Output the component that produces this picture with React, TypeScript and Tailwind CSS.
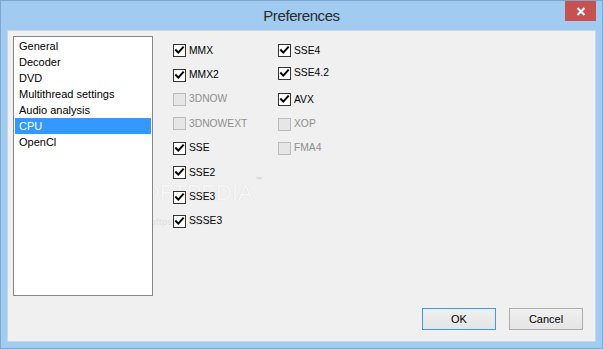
import React from "react";

type Item = { label: string; checked: boolean; disabled?: boolean; cls?: string };

const col1: Item[] = [
  { label: "MMX", checked: true },
  { label: "MMX2", checked: true },
  { label: "3DNOW", checked: false, disabled: true },
  { label: "3DNOWEXT", checked: false, disabled: true },
  { label: "SSE", checked: true },
  { label: "SSE2", checked: true },
  { label: "SSE3", checked: true },
  { label: "SSSE3", checked: true },
];

function Check({ item }: { item: Item }) {
  return (
    <div className={"flex items-center h-[24.4px] " + (item.cls ?? "")}>
      <div
        className={
          "w-[13px] h-[13px] border flex items-center justify-center shrink-0 " +
          (item.disabled ? "border-[#bcbcbc] bg-[#e6e6e6]" : "border-[#333333] bg-white")
        }
      >
        {item.checked && (
          <svg width="11" height="11" viewBox="0 0 11 11">
            <path d="M2 5.2 L4.3 7.6 L9 2.4" fill="none" stroke="#000" strokeWidth="2" strokeLinecap="square" />
          </svg>
        )}
      </div>
      <span
        className={
          "ml-[3px] text-[10.3px] leading-none " + (item.disabled ? "text-[#8f8f8f]" : "text-black")
        }
      >
        {item.label}
      </span>
    </div>
  );
}

export default function App() {
  const list = ["General", "Decoder", "DVD", "Multithread settings", "Audio analysis", "CPU", "OpenCl"];
  return (
    <div
      className="w-[603px] h-[349px] border border-[#7ea7cf] bg-[#a1cbf0] flex flex-col overflow-hidden"
      style={{ fontFamily: '"Liberation Sans", Arial, sans-serif' }}
    >
      <div className="relative h-[29px] shrink-0 flex items-center justify-center">
        <span className="text-[15px] tracking-[-0.4px] text-[#2b2b2b] mt-[1px]">Preferences</span>
        <div className="absolute right-[6px] top-0 w-[31px] h-[20px] bg-[#c75050] flex items-center justify-center">
          <svg width="10" height="9" viewBox="0 0 10 9">
            <path d="M1.5 1 L8.5 8 M8.5 1 L1.5 8" stroke="#fff" strokeWidth="2" />
          </svg>
        </div>
      </div>
      <div className="relative flex-1 mx-[6px] mb-[6px] bg-[#f0f0f0] border border-[#c6d7e8] flex flex-col">
        <div className="pointer-events-none absolute left-[120px] top-[151px] flex flex-col">
          <span
            className="text-[22px] leading-none text-[#f6f6f6]"
            style={{ textShadow: "0 0 1px #d2d2d2" }}
          >
            SOFTPEDIA
            <sup className="text-[6px] text-[#d0d0d0] align-top ml-[3px]">™</sup>
          </span>
          <span className="text-[9px] text-[#dedede] ml-[-6px] mt-[12px] tracking-[0.5px]">www.softpedia.com</span>
        </div>
        <div className="relative flex flex-1 pt-[5px] pl-[5px]">
          <div className="w-[140px] h-[260px] bg-white border border-[#828790] pt-[1px] pl-[1px] pr-[1px]">
            {list.map((l) => (
              <div
                key={l}
                className={
                  "h-[16px] flex items-center pl-[4px] text-[11px] " +
                  (l === "CPU" ? "bg-[#3399ff] text-white" : "text-black")
                }
              >
                {l}
              </div>
            ))}
          </div>
          <div className="ml-[20px] flex pt-[2.5px]">
            <div className="flex flex-col w-[105px]">
              {col1.map((i) => (
                <Check key={i.label} item={i} />
              ))}
            </div>
            <div className="flex flex-col">
              <Check item={{ label: "SSE4", checked: true }} />
              <Check item={{ label: "SSE4.2", checked: true, cls: "mt-[-2px]" }} />
              <Check item={{ label: "AVX", checked: true, cls: "mt-[2.3px]" }} />
              <Check item={{ label: "XOP", checked: false, disabled: true }} />
              <Check item={{ label: "FMA4", checked: false, disabled: true }} />
            </div>
          </div>
        </div>
        <div className="relative flex justify-end gap-[13px] pr-[12px] pb-[11px]">
          <button className="w-[74px] h-[22px] border border-[#3c9bf0] bg-gradient-to-b from-[#f0f0f0] to-[#e5e5e5] text-[11px] text-black">
            OK
          </button>
          <button className="w-[74px] h-[22px] border border-[#acacac] bg-gradient-to-b from-[#f0f0f0] to-[#e5e5e5] text-[11px] text-black">
            Cancel
          </button>
        </div>
      </div>
    </div>
  );
}
